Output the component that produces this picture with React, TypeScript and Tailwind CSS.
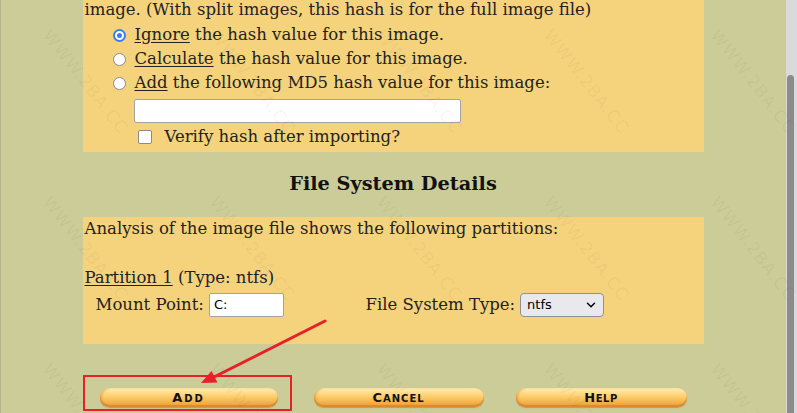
import { ChevronDown } from 'lucide-react';

// faint diagonal watermark tiles
const marks: { x: number; y: number }[] = [];
for (let r = 0; r < 3; r++) {
  for (let c = 0; c < 5; c++) {
    marks.push({ x: 85 + 167 * c, y: 82 + 167 * r });
  }
}

function Radio({ checked }: { checked?: boolean }) {
  if (checked) {
    return (
      <span className="flex h-[13px] w-[13px] shrink-0 items-center justify-center rounded-full border-2 border-[#3b7ee8] bg-white">
        <span className="h-[5px] w-[5px] rounded-full bg-[#3b7ee8]" />
      </span>
    );
  }
  return <span className="h-[13px] w-[13px] shrink-0 rounded-full border-[1.5px] border-[#8a8a8a] bg-white" />;
}

function HashOption({ label, rest, checked }: { label: string; rest: string; checked?: boolean }) {
  return (
    <div className="flex h-[24px] items-center whitespace-nowrap pl-[28px]">
      <Radio checked={checked} />
      <span className="ml-[9px]">
        <span className="underline underline-offset-2">{label}</span> {rest}
      </span>
    </div>
  );
}

function ImageButton({ label, width, tracking }: { label: string; width: string; tracking: string }) {
  return (
    <div
      className={`flex h-[19px] shrink-0 items-center justify-center rounded-full bg-linear-to-b from-[#fff0b4] via-[#fcc965] to-[#ea9a34] shadow-[inset_0_-2px_0_#dc8a2c,inset_2px_0_2px_rgba(220,140,50,0.5),0_1px_1px_rgba(0,0,0,0.2)] ${width}`}
    >
      <span className={`flex items-baseline font-['DejaVu_Sans',sans-serif] font-bold leading-none text-[#111] ${tracking}`}>
        <span className="text-[13px]">{label[0]}</span>
        <span className="text-[10px] uppercase">{label.slice(1)}</span>
      </span>
    </div>
  );
}

export default function App() {
  return (
    <div className="relative flex h-[413px] w-[797px] overflow-hidden bg-[#cccc99] font-['DejaVu_Serif',serif] text-[16.5px] text-[#222]">
      <main className="w-[785px] border-l border-[#b3b388]">
        <div className="mx-auto -mt-[19px] w-[621px]">
          {/* Data integrity panel */}
          <section className="bg-[#f5d37d] px-[2px] pb-[1px]">
            <div className="whitespace-nowrap leading-[19px]">
              Data Integrity: An MD5 hash can be used to verify the integrity of the
              <br />
              image. (With split images, this hash is for the full image file)
            </div>
            <div className="mt-[4px]">
              <HashOption label="Ignore" rest="the hash value for this image." checked />
              <HashOption label="Calculate" rest="the hash value for this image." />
              <HashOption label="Add" rest="the following MD5 hash value for this image:" />
            </div>
            <div className="mt-[4px] pl-[49px]">
              <div className="h-[24px] w-[327px] rounded-[2px] border border-[#a3a3a3] bg-white" />
            </div>
            <div className="flex h-[28px] items-center whitespace-nowrap pl-[53px]">
              <span className="h-[14px] w-[14px] rounded-[2px] border-[1.5px] border-[#8a8a8a] bg-white" />
              <span className="ml-[13px]">Verify hash after importing?</span>
            </div>
          </section>

          <h3 className="mb-[22px] mt-[21px] text-center text-[19.3px] font-bold leading-[22px] text-[#111]">
            File System Details
          </h3>

          {/* Partition panel */}
          <section className="bg-[#f5d37d] px-[2px] pb-[27px]">
            <div className="h-[24px] whitespace-nowrap leading-[24px]">
              Analysis of the image file shows the following partitions:
            </div>
            <div className="h-[25px]" />
            <div className="h-[24px] whitespace-nowrap leading-[24px]">
              <span className="underline underline-offset-2">Partition 1</span> (Type: ntfs)
            </div>
            <div className="mt-[3px] flex h-[24px] items-center whitespace-nowrap pl-[11px]">
              <div className="flex w-[270px] items-center">
                <span>Mount Point:</span>
                <div className="ml-[5px] flex h-[24px] w-[75px] items-center rounded-[2px] border border-[#a3a3a3] bg-white pl-[4px] font-['DejaVu_Sans',sans-serif] text-[13px] text-black">
                  C:
                </div>
              </div>
              <span>File System Type:</span>
              <div className="ml-[5px] flex h-[24px] w-[84px] items-center justify-between rounded-[4px] border border-[#8f8f9d] bg-[#e9e9ed] pl-[6px] pr-[5px] font-['DejaVu_Sans',sans-serif] text-[13px] text-black">
                ntfs
                <ChevronDown className="h-[14px] w-[14px]" strokeWidth={2.5} />
              </div>
            </div>
          </section>

          {/* Action buttons */}
          <div className="mt-[44px] flex items-center pl-[17px]">
            <ImageButton label="Add" width="w-[178px]" tracking="tracking-[2px]" />
            <div className="w-[36px] shrink-0" />
            <ImageButton label="Cancel" width="w-[170px]" tracking="tracking-[1px]" />
            <div className="w-[32px] shrink-0" />
            <ImageButton label="Help" width="w-[171px]" tracking="tracking-[0.5px]" />
          </div>
        </div>
      </main>

      {/* Scrollbar */}
      <div className="flex w-[12px] flex-col border-l border-[#c4c4c4] bg-[#dadada]">
        <div className="ml-[1px] mt-[75px] w-[7px] flex-1 rounded-t-[4px] bg-[#8b8b8b]" />
      </div>

      {/* Watermark */}
      {marks.map((m, i) => (
        <span
          key={i}
          className="pointer-events-none absolute -translate-x-1/2 -translate-y-1/2 rotate-[52deg] whitespace-nowrap font-['DejaVu_Sans',sans-serif] text-[17px] tracking-[1px] text-black/[0.05]"
          style={{ left: m.x, top: m.y }}
        >
          WWW.2BA.CC
        </span>
      ))}

      {/* Annotation */}
      <div className="pointer-events-none absolute left-[83px] top-[375px] h-[36px] w-[209px] border-2 border-[#e8202a]" />
      <svg className="pointer-events-none absolute left-0 top-0" width="797" height="413" viewBox="0 0 797 413">
        <line x1="325" y1="321" x2="214" y2="377" stroke="#e8202a" strokeWidth="3" strokeLinecap="round" />
        <polygon points="201,383 217.5,382.5 211.5,371" fill="#e8202a" />
      </svg>
    </div>
  );
}
